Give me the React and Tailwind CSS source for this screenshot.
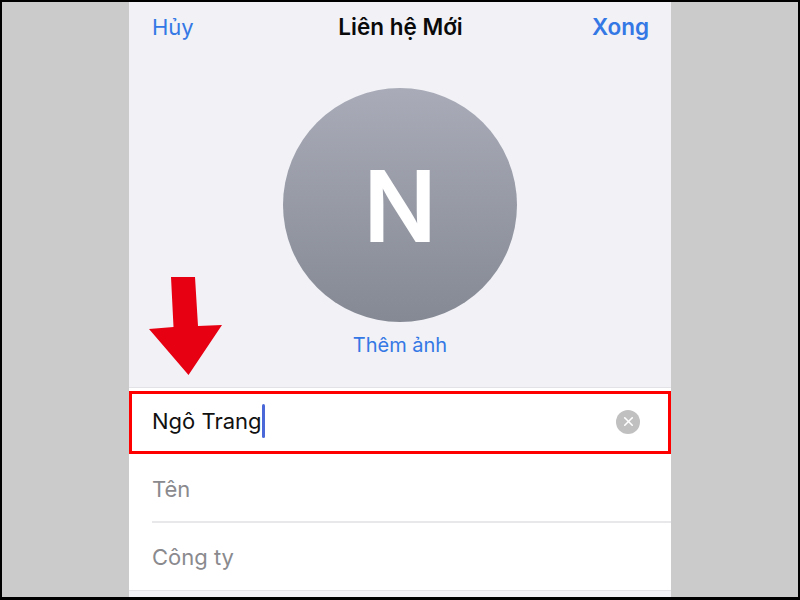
import React from 'react';
import { X } from 'lucide-react';

export default function App() {
  return (
    <div className="relative flex flex-col h-[600px] w-[800px] overflow-hidden bg-black pt-[2px] pb-[3px] px-[2px] font-['Inter',sans-serif]">
      <div className="flex flex-1 justify-center bg-[#cbcbcb]">
        <div className="relative flex w-[542px] flex-col bg-[#f1f1f6]">
          <header className="grid h-[50px] grid-cols-[1fr_auto_1fr] items-center pl-[23px] pr-[22px] text-[22px]">
            <button className="justify-self-start text-[#3478e5]">Hủy</button>
            <h1 className="text-[22.5px] font-semibold text-[#0a0a0a]">Liên hệ Mới</h1>
            <button className="justify-self-end text-[22.5px] font-semibold text-[#3478e5]">Xong</button>
          </header>

          <div className="flex flex-col items-center pt-[36px]">
            <div className="flex h-[234px] w-[234px] items-center justify-center rounded-full bg-gradient-to-b from-[#a9acb8] to-[#858993] pt-[2px] text-[96px] font-medium leading-none text-white [-webkit-text-stroke:2px_white]">
              N
            </div>
            <button className="mt-[9px] text-[20px] leading-[28px] text-[#3478e5]">Thêm ảnh</button>
          </div>

          <section className="mt-[28px] flex flex-1 flex-col border-t border-[#e2e2e7] bg-white pt-[3px]">
            <div className="flex h-[63px] items-center justify-between border-[3px] border-[#ff0000] pl-[20px] pr-[28px]">
              <div className="mb-[3px] flex items-center text-[22px] text-[#111]">
                Ngô Trang
                <span className="h-[34px] w-[3px] rounded-full bg-[#4a68d8]" />
              </div>
              <span className="mb-[2px] flex h-[24px] w-[24px] items-center justify-center rounded-full bg-[#c0c0c0] text-white">
                <X className="h-[15px] w-[15px]" strokeWidth={2.5} />
              </span>
            </div>
            <div className="ml-[23px] flex h-[69px] items-center border-b-2 border-[#e8e8ea] pt-[4px] text-[22px] text-[#8a8a8e]">Tên</div>
            <div className="ml-[23px] flex h-[67px] items-center pt-[1px] text-[22px] text-[#8a8a8e]">Công ty</div>
            <div className="flex-1 border-t border-[#e2e2e7] bg-[#f1f1f6]" />
          </section>

          <svg className="absolute left-[18px] top-[273px] h-[100px] w-[76px]" viewBox="0 0 76 100">
            <polygon points="24,2 48,2 51,51 75,50 41.5,100 2,54 26.5,52" fill="#e60012" />
          </svg>
        </div>
      </div>
    </div>
  );
}
